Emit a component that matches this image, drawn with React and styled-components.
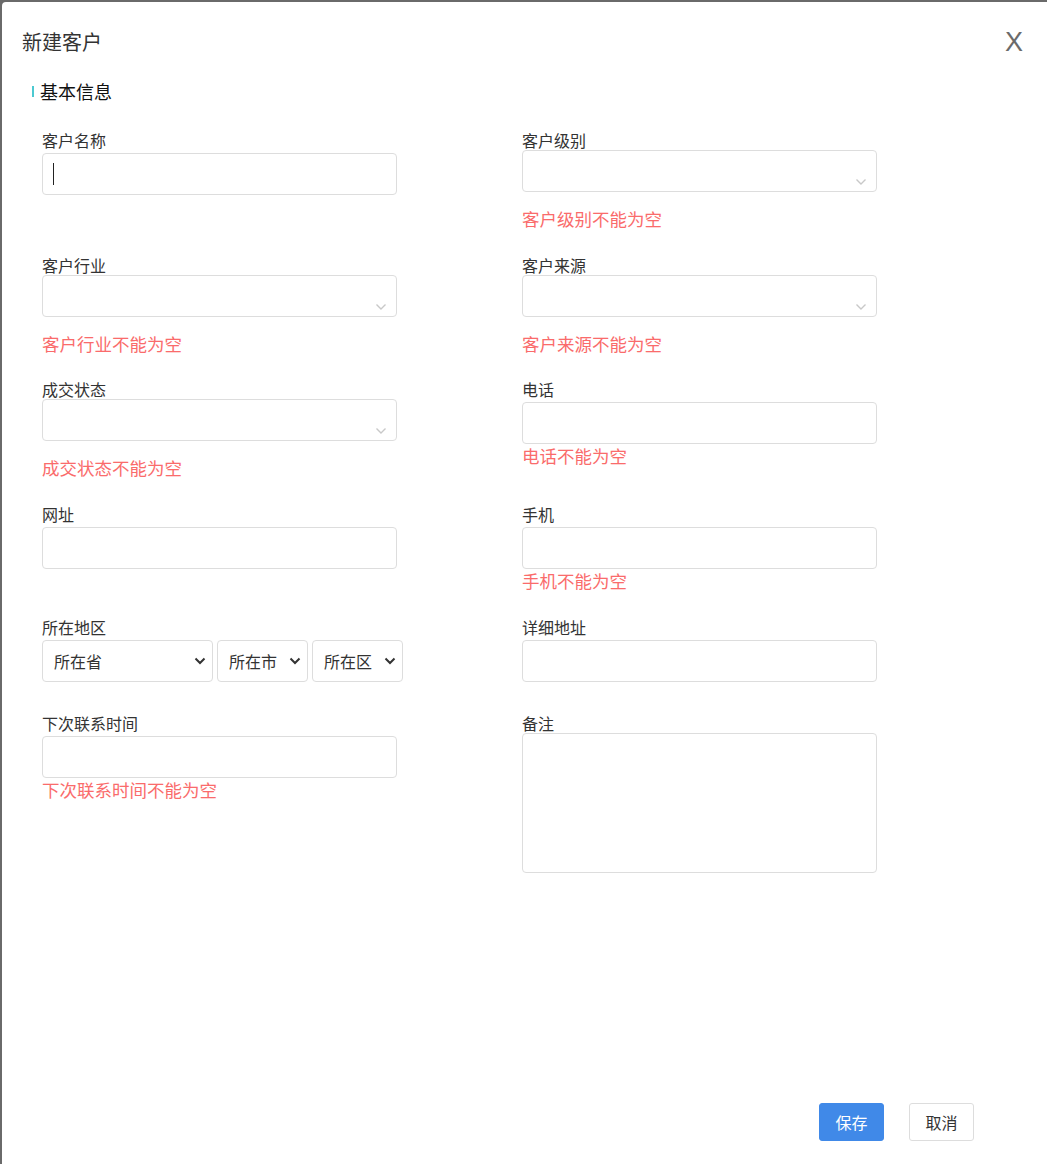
import React from "react"
import styled, { createGlobalStyle } from "styled-components"

const GlobalStyle = createGlobalStyle`
  html, body {
    margin: 0;
    padding: 0;
    background: #6a6a6a;
  }
  body {
    font-family: "Microsoft YaHei", "Noto Sans CJK SC", "Noto Sans", sans-serif;
  }
  * { box-sizing: border-box; }
`

const Modal = styled.div`
  margin: 2px 0 0 2px;
  width: 1045px;
  height: 1162px;
  background: #fff;
  border-top-left-radius: 4px;
  display: flex;
  flex-direction: column;
`

const Header = styled.div`
  display: flex;
  align-items: center;
  justify-content: space-between;
  padding: 26px 24px 0 20px;
  height: 54px;
`

const Title = styled.div`
  font-size: 20px;
  line-height: 28px;
  color: #333;
`

const Close = styled.div`
  font-family: "Liberation Sans", Arial, sans-serif;
  font-size: 27px;
  line-height: 28px;
  color: #6b6b6b;
  cursor: pointer;
`

const Section = styled.div`
  display: flex;
  align-items: center;
  padding: 23px 0 0 30px;
  height: 47px;
  font-size: 18px;
  line-height: 24px;
  color: #111;
`

const SectionBar = styled.span`
  display: inline-block;
  width: 2px;
  height: 11px;
  background: #4cc9d1;
  margin-right: 6px;
`

const Form = styled.div`
  flex: 1;
  display: grid;
  grid-template-columns: 480px 480px;
  grid-template-rows: ${p => p.rows};
  padding: 27px 0 0 40px;
`

const Field = styled.div`
  display: flex;
  flex-direction: column;
  align-items: flex-start;
`

const Label = styled.div`
  font-size: 16px;
  line-height: 20px;
  color: #333;
`

const InputWrap = styled.div`
  position: relative;
  margin-top: 3px;
`

const Input = styled.input`
  display: block;
  width: 355px;
  height: 42px;
  margin-top: 3px;
  border: 1px solid #ddd;
  border-radius: 4px;
  padding: 0 10px;
  font-size: 16px;
  color: #333;
  outline: none;
  font-family: inherit;
  ${InputWrap} & {
    margin-top: 0;
  }
`

const Caret = styled.span`
  position: absolute;
  left: 11px;
  top: 10px;
  width: 1px;
  height: 22px;
  background: #222;
`

const TextArea = styled.textarea`
  width: 355px;
  height: 140px;
  border: 1px solid #ddd;
  border-radius: 4px;
  padding: 8px 10px;
  font-size: 16px;
  resize: none;
  outline: none;
  font-family: inherit;
`

const SelectBox = styled.div`
  position: relative;
  width: 355px;
  height: 42px;
  border: 1px solid #ddd;
  border-radius: 4px;
  background: #fff;
`

const Chevron = styled.svg`
  position: absolute;
  right: 9px;
  bottom: 5px;
`

const Error = styled.div`
  font-size: 17.5px;
  line-height: 24px;
  color: #fa6b6b;
  margin-top: ${p => (p.$afterSelect ? "15px" : "0")};
`

const RegionRow = styled.div`
  display: flex;
  gap: 4px;
  margin-top: 3px;
`

const RegionSelect = styled.div`
  width: ${p => p.$w}px;
  height: 42px;
  border: 1px solid #ddd;
  border-radius: 4px;
  display: flex;
  align-items: center;
  justify-content: space-between;
  padding: 0 6px 0 11px;
  font-size: 16px;
  color: #333;
`

const Footer = styled.div`
  display: flex;
  justify-content: flex-end;
  gap: 25px;
  padding: 0 73px 23px 0;
`

const Button = styled.button`
  width: 65px;
  height: 38px;
  border-radius: 3px;
  font-size: 16px;
  font-family: inherit;
  cursor: pointer;
  border: 1px solid ${p => (p.$primary ? "#4089e8" : "#ddd")};
  background: ${p => (p.$primary ? "#4089e8" : "#fff")};
  color: ${p => (p.$primary ? "#fff" : "#333")};
`

function Select() {
  return (
    <SelectBox>
      <Chevron width="12" height="8" viewBox="0 0 12 8">
        <path d="M1.5 1.5 L6 6 L10.5 1.5" fill="none" stroke="#c8c8c8" strokeWidth="1.4" />
      </Chevron>
    </SelectBox>
  )
}

function Region({ w, text }) {
  return (
    <RegionSelect $w={w}>
      {text}
      <svg width="12" height="8" viewBox="0 0 12 8">
        <path d="M1.5 1.5 L6 6 L10.5 1.5" fill="none" stroke="#333" strokeWidth="2" />
      </svg>
    </RegionSelect>
  )
}

export default function App() {
  return (
    <>
      <GlobalStyle />
      <Modal>
        <Header>
          <Title>新建客户</Title>
          <Close>X</Close>
        </Header>
        <Section>
          <SectionBar />
          基本信息
        </Section>

        <Form rows="125px 124px 125px 113px 96px auto">
          <Field>
            <Label>客户名称</Label>
            <InputWrap>
              <Input />
              <Caret />
            </InputWrap>
          </Field>
          <Field>
            <Label>客户级别</Label>
            <Select />
            <Error $afterSelect>客户级别不能为空</Error>
          </Field>

          <Field>
            <Label>客户行业</Label>
            <Select />
            <Error $afterSelect>客户行业不能为空</Error>
          </Field>
          <Field>
            <Label>客户来源</Label>
            <Select />
            <Error $afterSelect>客户来源不能为空</Error>
          </Field>

          <Field>
            <Label>成交状态</Label>
            <Select />
            <Error $afterSelect>成交状态不能为空</Error>
          </Field>
          <Field>
            <Label>电话</Label>
            <Input />
            <Error>电话不能为空</Error>
          </Field>

          <Field>
            <Label>网址</Label>
            <Input />
          </Field>
          <Field>
            <Label>手机</Label>
            <Input />
            <Error>手机不能为空</Error>
          </Field>

          <Field>
            <Label>所在地区</Label>
            <RegionRow>
              <Region w={171} text="所在省" />
              <Region w={91} text="所在市" />
              <Region w={91} text="所在区" />
            </RegionRow>
          </Field>
          <Field>
            <Label>详细地址</Label>
            <Input />
          </Field>

          <Field>
            <Label>下次联系时间</Label>
            <Input />
            <Error>下次联系时间不能为空</Error>
          </Field>
          <Field>
            <Label>备注</Label>
            <TextArea />
          </Field>
        </Form>

        <Footer>
          <Button $primary>保存</Button>
          <Button>取消</Button>
        </Footer>
      </Modal>
    </>
  )
}
